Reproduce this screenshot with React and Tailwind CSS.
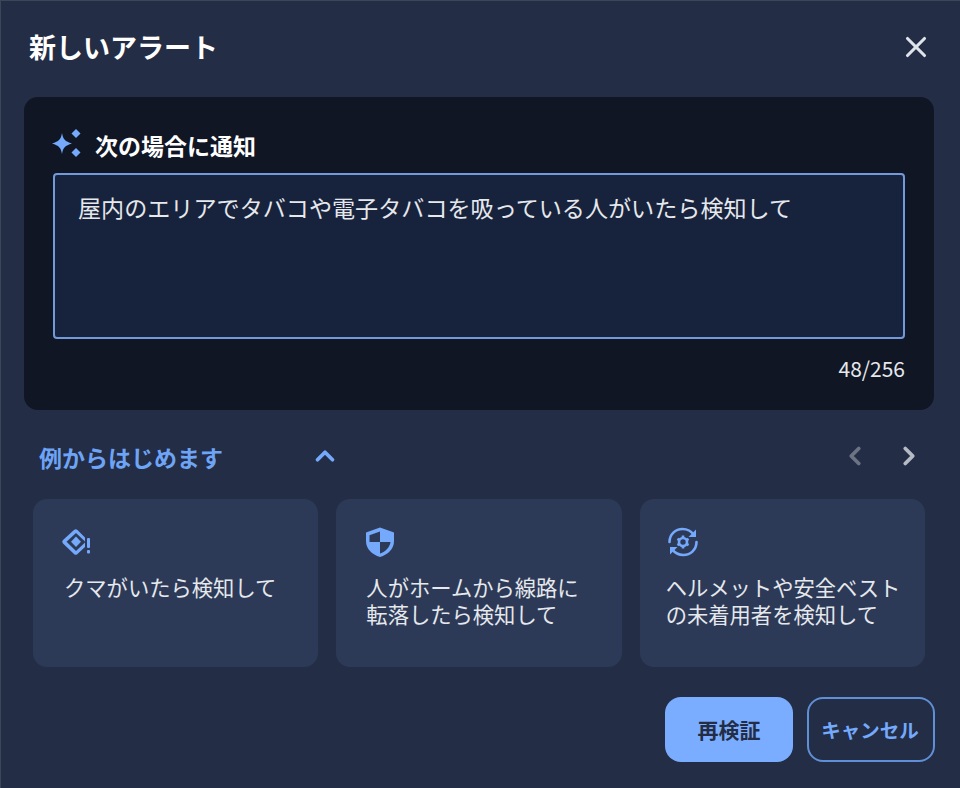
import { X, ChevronUp, ChevronLeft, ChevronRight } from 'lucide-react'

const font = { fontFamily: '"Noto Sans CJK JP", "Noto Sans", sans-serif' }

function SparkIcon() {
  return (
    <svg width="30" height="30" viewBox="0 0 30 30" className="text-[#74a9fb] -ml-[2px] -mt-[3px]" fill="currentColor">
      <path d="M11 4 C12 10 14 12.5 21 14.5 C14 16.5 12 19 11 25 C10 19 8 16.5 1 14.5 C8 12.5 10 10 11 4Z" />
      <path d="M25 0 L29.5 4.5 L25 9 L20.5 4.5Z" />
      <path d="M25 19 L29.5 23.5 L25 28 L20.5 23.5Z" />
    </svg>
  )
}

function DiamondIcon() {
  return (
    <svg width="34" height="32" viewBox="0 0 34 32" fill="none" className="text-[#74a9fb]">
      <path d="M15 4 L4 14 a2.5 2.5 0 0 0 0 3.5 L15 28 a2.5 2.5 0 0 0 3.5 0 L26 21 V16.5 L17 25 L7.5 15.8 L17 7 L26 15.5 V11.5 L18.5 4 a2.5 2.5 0 0 0 -3.5 0Z" fill="currentColor" />
      <path d="M17 10.5 L22 15.8 L17 21 L12 15.8Z" fill="currentColor" />
      <rect x="28" y="12" width="3" height="10" rx="1" fill="currentColor" />
      <rect x="28" y="24" width="3" height="3.5" rx="1" fill="currentColor" />
    </svg>
  )
}

function ShieldIcon() {
  return (
    <svg width="32" height="32" viewBox="0 0 32 32" className="text-[#74a9fb]">
      <path d="M16 1.5 L30 6.5 V15 C30 23 24 28.5 16 31 C8 28.5 2 23 2 15 V6.5Z" fill="currentColor" />
      <path d="M16 5.5 V16 H5.5 V9.2Z" fill="#2c3a58" />
      <path d="M16 16 H26.5 C25.8 21.5 21.5 25.5 16 27.5Z" fill="#2c3a58" />
    </svg>
  )
}

function SyncGearIcon() {
  return (
    <svg width="34" height="34" viewBox="0 0 34 34" fill="none" stroke="#74a9fb" className="text-[#74a9fb]">
      <path d="M3.5 17 C3.5 9.5 9.5 4 16.5 4 C21.5 4 25.5 6.5 28 10" strokeWidth="2.6" strokeLinecap="round" />
      <path d="M30.5 17 C30.5 24.5 24.5 30 17.5 30 C12.5 30 8.5 27.5 6 24" strokeWidth="2.6" strokeLinecap="round" />
      <path d="M30 4.5 V12 H22.5Z" fill="currentColor" stroke="none" />
      <path d="M4 29.5 V22 H11.5Z" fill="currentColor" stroke="none" />
      <circle cx="17" cy="17" r="4" strokeWidth="2.6" />
      <path d="M17 10.5 V12.5 M17 21.5 V23.5 M11.4 13.8 L13.1 14.8 M20.9 19.2 L22.6 20.2 M11.4 20.2 L13.1 19.2 M20.9 14.8 L22.6 13.8" strokeWidth="2.6" />
    </svg>
  )
}

const examples = [
  { icon: DiamondIcon, text: 'クマがいたら検知して', iconPad: 'pl-[26px]', textPad: 'pl-[31px]' },
  { icon: ShieldIcon, text: '人がホームから線路に\n転落したら検知して', iconPad: 'pl-[28px]', textPad: 'pl-[30px]' },
  { icon: SyncGearIcon, text: 'ヘルメットや安全ベスト\nの未着用者を検知して', iconPad: 'pl-[26px]', textPad: 'pl-[26px]' },
]

export default function App() {
  return (
    <div
      style={font}
      className="w-[960px] h-[788px] bg-[#232d45] border-t border-l border-[#3b4658] flex flex-col overflow-hidden text-white"
    >
      <header className="h-[96px] shrink-0 flex items-center justify-between pl-[28px] pr-[27px] pb-[5px]">
        <h1 className="text-[27px] font-bold leading-none">新しいアラート</h1>
        <X className="w-[34px] h-[34px] text-[#dfe3ea]" strokeWidth={2.2} />
      </header>

      <section className="ml-[23px] mr-[26px] h-[313px] shrink-0 rounded-[14px] bg-[#101624] px-[29px] pt-[32px]">
        <div className="flex items-center gap-[14px] h-[32px]">
          <SparkIcon />
          <span className="text-[23px] font-bold leading-none">次の場合に通知</span>
        </div>
        <div className="mt-[12px] h-[166px] rounded-[4px] border-2 border-[#7299da] bg-[#17233c] pl-[23px] pt-[16px] text-[23.1px] leading-[32px] text-[#e6e8ec]">
          屋内のエリアでタバコや電子タバコを吸っている人がいたら検知して
        </div>
        <div className="mt-[14px] text-right text-[21px] leading-[30px] text-[#e6e8ec]">48/256</div>
      </section>

      <div className="ml-[38px] mr-[36px] mt-[27px] h-[40px] shrink-0 flex items-center justify-between">
        <div className="flex items-center">
          <span className="w-[271px] text-[23px] font-bold leading-none text-[#6ea4f5]">例からはじめます</span>
          <ChevronUp className="w-[30px] h-[30px] mb-[2px] text-[#74a9fb]" strokeWidth={3} />
        </div>
        <div className="flex items-center gap-[24px] mb-[2px]">
          <ChevronLeft className="w-[30px] h-[30px] text-[#6b7384]" strokeWidth={3} />
          <ChevronRight className="w-[30px] h-[30px] text-[#b5bac4]" strokeWidth={3} />
        </div>
      </div>

      <div className="ml-[32px] mr-[35px] mt-[22px] grid grid-cols-3 gap-[18px] shrink-0">
        {examples.map((item) => (
          <div key={item.text} className="h-[168px] rounded-[14px] bg-[#2c3a58] pt-[26px]">
            <div className={`h-[34px] flex items-center ${item.iconPad}`}>
              <item.icon />
            </div>
            <p className={`mt-[14px] text-[21.3px] leading-[27px] text-[#e6e8ec] whitespace-pre-line ${item.textPad}`}>
              {item.text}
            </p>
          </div>
        ))}
      </div>

      <div className="mx-[25px] mt-[30px] flex justify-end gap-[14px]">
        <button className="w-[128px] h-[65px] rounded-[16px] bg-[#7aadff] text-[21px] font-bold text-[#232d45]">
          再検証
        </button>
        <button className="w-[128px] h-[65px] rounded-[16px] border-2 border-[#5f8fd6] text-[19.5px] font-bold text-[#74a9fb] pr-[2px]">
          キャンセル
        </button>
      </div>
    </div>
  )
}
